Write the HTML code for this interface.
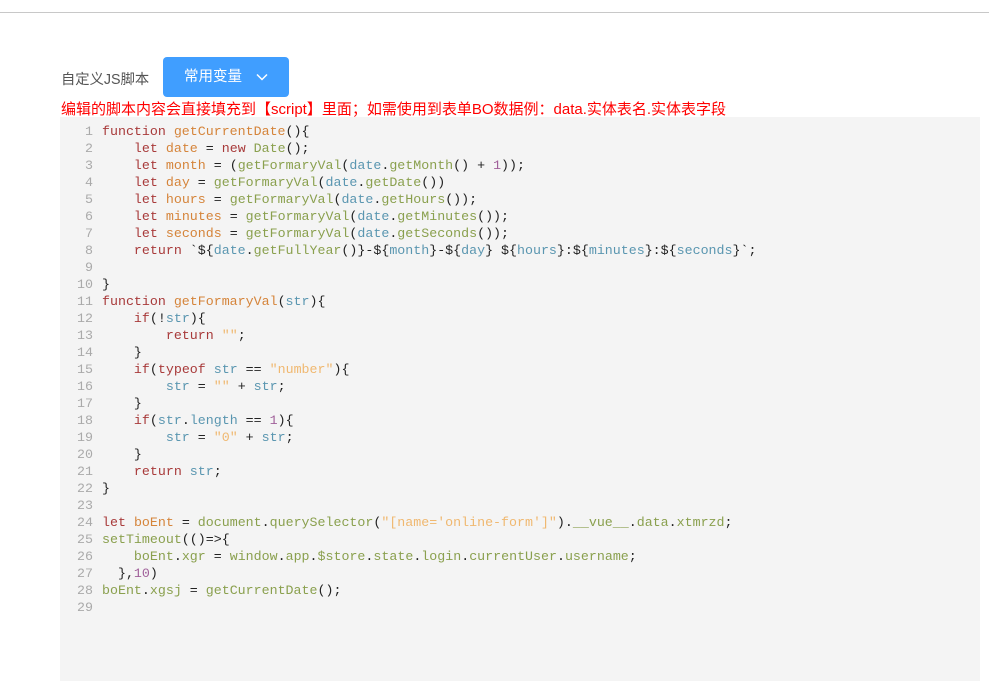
<!DOCTYPE html>
<html><head><meta charset="utf-8"><style>
body{margin:0;width:989px;height:681px;background:#fff;overflow:hidden;font-family:"Liberation Sans","Noto Sans CJK SC",sans-serif;position:relative}
.top{position:absolute;left:0;top:12px;width:989px;height:1px;background:#c8c8c8}
.lbl{position:absolute;left:61px;top:68px;font-size:14.3px;color:#555}
.btn{position:absolute;left:163px;top:57px;width:126px;height:40px;background:#409eff;border-radius:4px;color:#fff;font-size:14.5px;line-height:40px;box-sizing:border-box;padding-left:21px}
.btn svg{position:absolute;left:93px;top:16px}
.warn{position:absolute;left:61px;top:98px;font-size:15px;color:#f00;white-space:nowrap}
.code{position:absolute;left:60px;top:117px;width:920px;height:564px;background:#f4f4f4}
pre{margin:0;position:absolute;top:6px;left:0;font-family:"Liberation Mono",monospace;font-size:13.3px;line-height:17px;color:#222}
.g{position:absolute;left:0;width:33px;text-align:right;color:#aaa}
.c{position:absolute;left:42px}
.k{color:#a83a3a}.v{color:#d5843a}.f{color:#8aa04e}.p{color:#5a96b0}.s{color:#f0b870}.n{color:#a0609a}
</style></head><body>
<div class="top"></div>
<div class="lbl">自定义JS脚本</div>
<div class="btn">常用变量<svg width="12" height="8" viewBox="0 0 12 8"><path d="M1 1.5 6 6.5 11 1.5" fill="none" stroke="#fff" stroke-width="1.5"/></svg></div>
<div class="warn">编辑的脚本内容会直接填充到【script】里面；如需使用到表单BO数据例：data.实体表名.实体表字段</div>
<div class="code">
<pre class="g">1
2
3
4
5
6
7
8
9
10
11
12
13
14
15
16
17
18
19
20
21
22
23
24
25
26
27
28
29</pre>
<pre class="c"><span class="k">function</span> <span class="v">getCurrentDate</span>(){
    <span class="k">let</span> <span class="v">date</span> = <span class="k">new</span> <span class="f">Date</span>();
    <span class="k">let</span> <span class="v">month</span> = (<span class="f">getFormaryVal</span>(<span class="p">date</span>.<span class="f">getMonth</span>() + <span class="n">1</span>));
    <span class="k">let</span> <span class="v">day</span> = <span class="f">getFormaryVal</span>(<span class="p">date</span>.<span class="f">getDate</span>())
    <span class="k">let</span> <span class="v">hours</span> = <span class="f">getFormaryVal</span>(<span class="p">date</span>.<span class="f">getHours</span>());
    <span class="k">let</span> <span class="v">minutes</span> = <span class="f">getFormaryVal</span>(<span class="p">date</span>.<span class="f">getMinutes</span>());
    <span class="k">let</span> <span class="v">seconds</span> = <span class="f">getFormaryVal</span>(<span class="p">date</span>.<span class="f">getSeconds</span>());
    <span class="k">return</span> `${<span class="p">date</span>.<span class="f">getFullYear</span>()}-${<span class="p">month</span>}-${<span class="p">day</span>} ${<span class="p">hours</span>}:${<span class="p">minutes</span>}:${<span class="p">seconds</span>}`;

}
<span class="k">function</span> <span class="v">getFormaryVal</span>(<span class="p">str</span>){
    <span class="k">if</span>(!<span class="p">str</span>){
        <span class="k">return</span> <span class="s">""</span>;
    }
    <span class="k">if</span>(<span class="k">typeof</span> <span class="p">str</span> == <span class="s">"number"</span>){
        <span class="p">str</span> = <span class="s">""</span> + <span class="p">str</span>;
    }
    <span class="k">if</span>(<span class="p">str</span>.<span class="p">length</span> == <span class="n">1</span>){
        <span class="p">str</span> = <span class="s">"0"</span> + <span class="p">str</span>;
    }
    <span class="k">return</span> <span class="p">str</span>;
}

<span class="k">let</span> <span class="v">boEnt</span> = <span class="f">document</span>.<span class="f">querySelector</span>(<span class="s">"[name='online-form']"</span>).<span class="f">__vue__</span>.<span class="f">data</span>.<span class="f">xtmrzd</span>;
<span class="f">setTimeout</span>(()=&gt;{
    <span class="f">boEnt</span>.<span class="f">xgr</span> = <span class="f">window</span>.<span class="f">app</span>.<span class="f">$store</span>.<span class="f">state</span>.<span class="f">login</span>.<span class="f">currentUser</span>.<span class="f">username</span>;
  },<span class="n">10</span>)
<span class="f">boEnt</span>.<span class="f">xgsj</span> = <span class="f">getCurrentDate</span>();
</pre>
</div>
</body></html>
